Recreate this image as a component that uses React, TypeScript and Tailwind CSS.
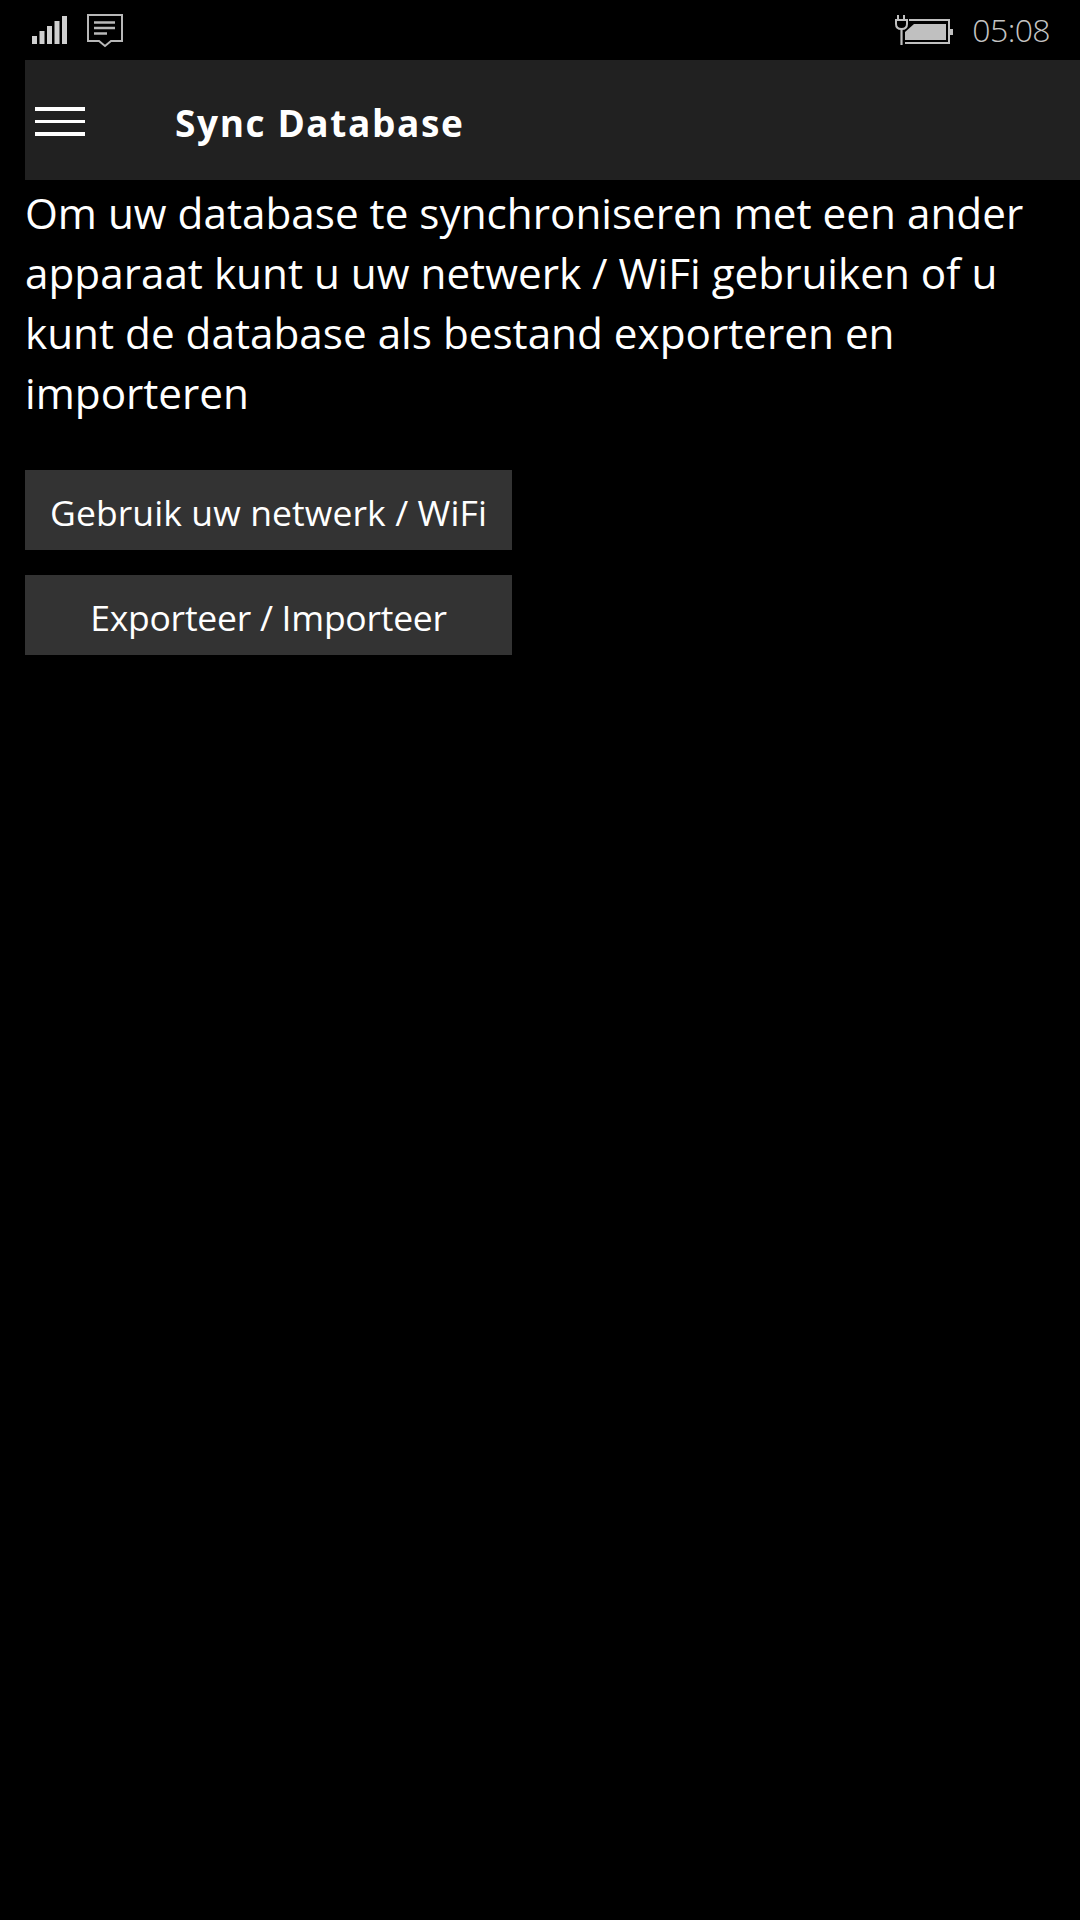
export default function App() {
  return (
    <div className="w-[1080px] h-[1920px] bg-black text-white overflow-hidden font-['Open_Sans',sans-serif]">
      <div className="h-[60px] flex items-center justify-between pl-[32px] pr-[30px]">
        <div className="flex items-center gap-[19px]">
          <svg width="36" height="30" viewBox="0 0 36 30" fill="#d0d0d0">
            <rect x="0" y="21" width="5" height="8" />
            <rect x="7.5" y="16" width="5" height="13" />
            <rect x="15" y="11" width="5" height="18" />
            <rect x="22.5" y="6" width="5" height="23" />
            <rect x="30" y="1" width="5" height="28" />
          </svg>
          <svg width="36" height="34" viewBox="0 0 36 34" fill="none" className="mt-[2px]">
            <path d="M1 1H35V27H24L18 32L12 27H1Z" stroke="#b8b8b8" strokeWidth="2" />
            <path d="M7 8.5H28M7 14H28M7 19.5H20" stroke="#b8b8b8" strokeWidth="2.4" />
          </svg>
        </div>
        <div className="flex items-center gap-[19px]">
          <svg width="58" height="30" viewBox="0 0 58 30" fill="none">
            <path d="M3 0V5M9 0V5" stroke="#c0c0c0" strokeWidth="2" />
            <path d="M1 5H12V9C12 12 10 14 6.5 14C3 14 1 12 1 9Z" stroke="#c0c0c0" strokeWidth="2" />
            <path d="M6.5 14V30" stroke="#c0c0c0" strokeWidth="2.2" />
            <path d="M14 5H54V28H10" stroke="#c0c0c0" strokeWidth="2" />
            <path d="M55 14H58V20H55Z" fill="#c0c0c0" />
            <path d="M19 9H51V25H10V17Z" fill="#c0c0c0" />
          </svg>
          <span className="text-[32px] leading-none font-light text-[#c4c4c4] tracking-[-0.6px]">05:08</span>
        </div>
      </div>
      <div className="ml-[25px] h-[120px] bg-[#212121] flex items-center">
        <div className="ml-[10px] mt-[3px] w-[50px] flex flex-col gap-[9px]">
          <div className="h-[4px] bg-white" />
          <div className="h-[3px] bg-white" />
          <div className="h-[4px] bg-white" />
        </div>
        <h1 className="ml-[90px] pt-[5px] text-[37px] leading-none font-bold tracking-[1.6px]">Sync Database</h1>
      </div>
      <div className="pl-[25px] pr-[20px]">
        <p className="pt-[3px] text-[42.25px] leading-[60px] font-normal">
          Om uw database te synchroniseren met een ander apparaat kunt u uw netwerk / WiFi gebruiken of u kunt de database als bestand exporteren en importeren
        </p>
        <div className="mt-[47px] flex flex-col gap-[25px] w-[487px]">
          <button className="h-[80px] bg-[#333333] text-[35.5px] font-normal tracking-[0.1px] pt-[5px]">Gebruik uw netwerk / WiFi</button>
          <button className="h-[80px] bg-[#333333] text-[35.5px] font-normal tracking-[-0.25px] pt-[5px]">Exporteer / Importeer</button>
        </div>
      </div>
    </div>
  );
}
